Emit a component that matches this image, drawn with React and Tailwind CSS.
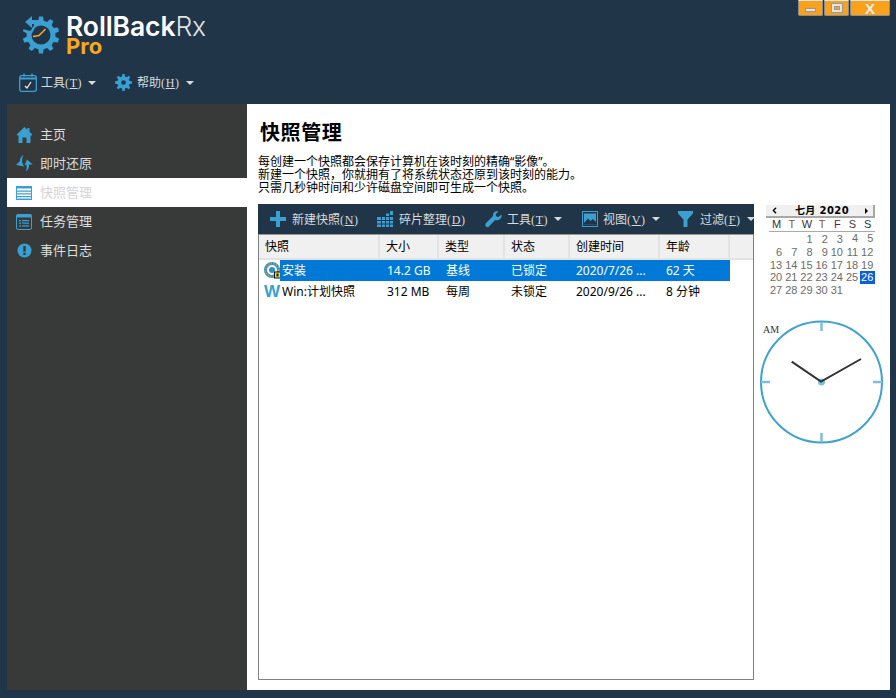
import { ChevronLeft } from "lucide-react"

const cjk = "font-['Noto_Sans','Noto_Sans_CJK_SC',sans-serif]"

// builds a cog outline for the logo and the help menu icon
const gearPath = (cx, cy, outer, inner, teeth) => {
  const pts = []
  for (let i = 0; i < teeth; i++) {
    const step = (Math.PI * 2) / teeth
    const a = i * step - Math.PI / 2
    const list = [
      [a - step * 0.17, outer],
      [a + step * 0.17, outer],
      [a + step * 0.3, inner],
      [a + step * 0.7, inner],
    ]
    list.forEach(([ang, r]) => {
      pts.push(`${(cx + Math.cos(ang) * r).toFixed(2)} ${(cy + Math.sin(ang) * r).toFixed(2)}`)
    })
  }
  return "M" + pts.join("L") + "Z"
}

const LogoGear = () => (
  <svg width="40" height="40" viewBox="0 0 40 40" className="shrink-0">
    <path d={gearPath(20, 21, 18.5, 14.5, 10)} fill="#3a9fd1" />
    <circle cx="20" cy="21" r="9.5" fill="#213549" />
    <path d="M0 0H12L13 13L9 17L2 15Z" fill="#213549" />
    <path d="M4 8L11 2V6H20V10H11V14Z" fill="#3a9fd1" />
    <path d="M11 14L14 10.500L13.500 15L11 19Z" fill="#3a9fd1" />
    <path d="M12 22.500L18 21.500L24.500 15" fill="none" stroke="#f5a623" strokeWidth="1.600" />
  </svg>
)

const CalendarIcon = () => (
  <svg width="18" height="19" viewBox="0 0 18 19" className="shrink-0">
    <rect x="0.700" y="2.700" width="16.600" height="15.600" rx="2" fill="none" stroke="#3a9fd1" strokeWidth="1.300" />
    <path d="M1 5.500h16" stroke="#3a9fd1" strokeWidth="2" />
    <path d="M5 0.500v3M13 0.500v3" stroke="#3a9fd1" strokeWidth="1.500" />
    <path d="M6 13l2 2L12 9" fill="none" stroke="#e8e8e8" strokeWidth="1.300" />
  </svg>
)

const HelpGear = () => (
  <svg width="17" height="17" viewBox="0 0 18 18" className="shrink-0">
    <path d={gearPath(9, 9, 9, 6.600, 8)} fill="#3a9fd1" />
    <circle cx="9" cy="9" r="2.500" fill="#213549" />
  </svg>
)

const Caret = () => <span className="ml-[6px] inline-block w-0 h-0 border-x-[4px] border-x-transparent border-t-[4px] border-t-[#d8dadc]" />

const HomeIcon = () => (
  <svg width="15" height="16" viewBox="0 0 15 16">
    <path d="M7.500 0L10.500 2.800V1H12.500V4.700L15 7.200V8.500H13.500V16H9.500V10.500H5.500V16H1.500V8.500H0V7.200Z" fill="#3a9fd1" />
  </svg>
)

const RestoreIcon = () => (
  <svg width="17" height="17" viewBox="0 0 17 17">
    <path d="M7.700 0Q3.500 2.500 4 6L0 10L8 11.500L6 7Q5.500 3 7.700 0Z" fill="#3a9fd1" />
    <path d="M10 16.500Q13.500 13.500 13 9.500L16.700 9.500L11 4.500L8.500 10.500L10.500 9.500Q11 13 10 16.500Z" fill="#3a9fd1" />
  </svg>
)

const ListIcon = () => (
  <svg width="16" height="14" viewBox="0 0 16 14">
    <rect width="16" height="14" fill="#3a9fd1" />
    <path d="M1 2.500h14v2H1zM1 5.800h14v1.400H1zM1 8.500h14v1.400H1zM1 11.200h14v1.400H1z" fill="#fff" />
  </svg>
)

const TaskIcon = () => (
  <svg width="16" height="16" viewBox="0 0 16 16">
    <rect x="0.500" y="0.500" width="15" height="15" rx="1.500" fill="none" stroke="#3a9fd1" />
    <path d="M0.500 0.500h15v3h-15z" fill="#3a9fd1" />
    <path d="M3 6h2v1.200H3zM6 6h7v1.200H6zM3 8.600h2v1.200H3zM6 8.600h7v1.200H6zM3 11.200h2v1.200H3zM6 11.200h7v1.200H6z" fill="#3a9fd1" />
  </svg>
)

const AlertIcon = () => (
  <svg width="15" height="15" viewBox="0 0 15 15">
    <circle cx="7.500" cy="7.500" r="7" fill="#3a9fd1" />
    <rect x="6.300" y="3" width="2.400" height="5.600" fill="#373a38" />
    <rect x="6.300" y="9.800" width="2.400" height="2.200" fill="#373a38" />
  </svg>
)

const PlusIcon = () => (
  <svg width="16" height="16" viewBox="0 0 16 16" className="shrink-0">
    <path d="M6 0h4v6h6v4h-6v6H6v-6H0V6h6z" fill="#3a9fd1" />
  </svg>
)

const DefragIcon = () => (
  <svg width="16" height="16" viewBox="0 0 16 16" className="shrink-0">
    <path
      d="M0 6h4v3H0zM5 6h3v3H5zM9 6h3v3H9zM0 10h4v2.500H0zM5 10h3v2.500H5zM9 10h3v2.500H9zM13 10h3v2.500h-3zM0 13.500h4V16H0zM5 13.500h3V16H5zM9 13.500h3V16H9zM13 13.500h3V16h-3zM13 6h3v3h-3zM9 2.500h3v2.500H9zM13 0h3v4h-3z"
      fill="#3a9fd1"
    />
  </svg>
)

const WrenchIcon = () => (
  <svg width="17" height="17" viewBox="0 0 17 17" className="shrink-0">
    <path d="M16.500 3.500L13.500 6L11 5.200L10.800 3L13.500 0.500C10.500 -0.500 7.500 1.500 8 5L1 12C-0.500 13.500 0.500 16.500 3.200 16.300L10.200 9C13.500 10 17.500 7.500 16.500 3.500Z" fill="#3a9fd1" />
  </svg>
)

const PictureIcon = () => (
  <svg width="16" height="16" viewBox="0 0 16 16" className="shrink-0">
    <rect x="0.500" y="0.500" width="15" height="15" fill="none" stroke="#3a9fd1" />
    <rect x="2" y="2.500" width="12" height="11" fill="#3a9fd1" />
    <path d="M2 12L6 7.500L8.500 10L11 8L14 11V13.500H2Z" fill="#213549" />
  </svg>
)

const FilterIcon = () => (
  <svg width="15" height="16" viewBox="0 0 15 16" className="shrink-0">
    <path d="M0 0H15V2.500L9.500 8.500V16H5.500V8.500L0 2.500Z" fill="#3a9fd1" />
  </svg>
)

const DiskLockIcon = () => (
  <svg width="18" height="17" viewBox="0 0 18 17" className="shrink-0">
    <circle cx="8" cy="8" r="6.500" fill="#fff" stroke="#2f8fc7" strokeWidth="3" />
    <circle cx="8" cy="8" r="6.500" fill="none" stroke="#d9a23c" strokeWidth="1.500" strokeDasharray="1.200 1.400" />
    <circle cx="8" cy="8" r="3" fill="#2f8fc7" />
    <rect x="10.500" y="10" width="6" height="6" fill="#f7e21c" stroke="#111" />
    <rect x="12.500" y="11.500" width="2" height="3" fill="#111" />
  </svg>
)

const navItems = [
  { label: "主页", icon: <HomeIcon /> },
  { label: "即时还原", icon: <RestoreIcon /> },
  { label: "快照管理", icon: <ListIcon />, active: true },
  { label: "任务管理", icon: <TaskIcon /> },
  { label: "事件日志", icon: <AlertIcon /> },
]

const columns = [
  { label: "快照", w: "w-[121px]" },
  { label: "大小", w: "w-[59px]" },
  { label: "类型", w: "w-[66px]" },
  { label: "状态", w: "w-[65px]" },
  { label: "创建时间", w: "w-[90px]" },
  { label: "年龄", w: "w-[70px]" },
]

const dayNames = ["M", "T", "W", "T", "F", "S", "S"]
const dayColors = ["text-[#333]", "text-[#8a5a1e]", "text-[#333]", "text-[#8a5a1e]", "text-[#5a1e4a]", "text-[#444]", "text-[#1e3a5a]"]
const days = [null, null, 1, 2, 3, 4, 5, 6, 7, 8, 9, 10, 11, 12, 13, 14, 15, 16, 17, 18, 19, 20, 21, 22, 23, 24, 25, 26, 27, 28, 29, 30, 31]

const Clock = () => (
  <svg width="126" height="124" viewBox="0 0 126 124" className="block">
    <circle cx="63.500" cy="62" r="60.500" fill="none" stroke="#3fa2cf" strokeWidth="2" />
    <path d="M63.500 2v9M63.500 113v9M3 62h9M115 62h9" stroke="#7cc0e0" strokeWidth="2.500" />
    <circle cx="63.500" cy="62" r="3.500" fill="#7cc0e0" />
    <path d="M33.700 41.700L63 61.500L103 39" fill="none" stroke="#333" strokeWidth="2" />
  </svg>
)

const ToolbarItem = ({ icon, label, hotkey, caret, className }) => (
  <div className={`flex items-center shrink-0 ${className}`}>
    {icon}
    <span className="whitespace-nowrap pt-px">
      {label}
      <span className="font-['Liberation_Serif',serif] tracking-[0.6px]">
        (<span className="underline">{hotkey}</span>)
      </span>
    </span>
    {caret && <Caret />}
  </div>
)

const captionBtn = "h-[16px] bg-[#f9a11b] border border-[#8d8d8d] border-t-[#e8e8e8] rounded-b-[2px] flex items-center justify-center"

export default function App() {
  return (
    <div className={`w-[896px] h-[698px] bg-[#213549] flex flex-col overflow-hidden relative ${cjk}`}>
      <div className="absolute right-[6px] top-0 flex gap-px">
        <div className={`w-[25px] ${captionBtn}`}>
          <span className="w-[11px] h-[4px] mt-1 bg-[#e4e4e4] border border-[#999]" />
        </div>
        <div className={`w-[25px] ${captionBtn}`}>
          <span className="w-[12px] h-[10px] bg-[#e4e4e4] border border-[#999] flex items-center justify-center">
            <span className="w-[6px] h-[4px] bg-[#f9a11b] border border-[#999]" />
          </span>
        </div>
        <div className={`w-[40px] ${captionBtn} text-[#ececec] text-[15px] font-bold leading-none font-['Liberation_Sans',sans-serif]`}>
          X
        </div>
      </div>

      <div className="h-[104px] shrink-0 flex flex-col pl-[19px]">
        <div className="flex mt-[14px] pl-[2px] h-[40px]">
          <LogoGear />
          <div className="ml-[5px] font-['Inter',sans-serif]">
            <div className="text-[26.500px] leading-[22px] mt-[1px] tracking-[-0.1px] whitespace-nowrap text-white font-semibold">
              RollBack<span className="font-light text-[#dfe3e6]">Rx</span>
            </div>
            <div className="text-[22px] leading-[18px] font-bold text-[#f7a81f]">Pro</div>
          </div>
        </div>
        <div className="flex items-center mt-[19px] text-[12px] text-[#d8dadc]">
          <ToolbarItem icon={<CalendarIcon />} label={<span className="ml-[4px]">工具</span>} hotkey="T" caret className="w-[96px]" />
          <ToolbarItem icon={<HelpGear />} label={<span className="ml-[5px]">帮助</span>} hotkey="H" caret />
        </div>
      </div>

      <div className="flex h-[586px] ml-[7px] mr-[6px] shrink-0">
        <nav className="w-[240px] shrink-0 bg-[#373a38] pt-[16px]">
          {navItems.map((item) => (
            <div
              key={item.label}
              className={`h-[29px] flex items-center text-[13px] ${item.active ? "bg-white text-[#d4d4d4]" : "text-[#dddddd]"}`}
            >
              <span className="w-[33px] flex justify-center pl-[1px] shrink-0">{item.icon}</span>
              {item.label}
            </div>
          ))}
        </nav>

        <main className="flex-1 bg-white pl-[11px] pr-[15px] pt-[16px] flex gap-[12px] min-w-0">
          <div className="w-[496px] shrink-0 flex flex-col">
            <h1 className="text-[20px] leading-[26px] font-bold tracking-[0.6px] pl-[2px] text-black font-['Liberation_Serif','Noto_Sans_CJK_SC',serif]">快照管理</h1>
            <div className="mt-[9px] text-[12px] leading-[13px] text-black whitespace-nowrap">
              <p>每创建一个快照都会保存计算机在该时刻的精确“影像”。</p>
              <p>新建一个快照，你就拥有了将系统状态还原到该时刻的能力。</p>
              <p>只需几秒钟时间和少许磁盘空间即可生成一个快照。</p>
            </div>
            <div className="mt-[10px] h-[30px] bg-[#213549] flex items-center pl-[12px] text-[12px] text-[#d8dadc] overflow-hidden shrink-0">
              <ToolbarItem icon={<PlusIcon />} label={<span className="ml-[6px]">新建快照</span>} hotkey="N" className="w-[107px]" />
              <ToolbarItem icon={<DefragIcon />} label={<span className="ml-[6px]">碎片整理</span>} hotkey="D" className="w-[108px]" />
              <ToolbarItem icon={<WrenchIcon />} label={<span className="ml-[5px]">工具</span>} hotkey="T" caret className="w-[97px]" />
              <ToolbarItem icon={<PictureIcon />} label={<span className="ml-[5px]">视图</span>} hotkey="V" caret className="w-[96px]" />
              <ToolbarItem icon={<FilterIcon />} label={<span className="ml-[7px]">过滤</span>} hotkey="F" caret />
            </div>
            <div className="h-[446px] border border-[#808080] border-t-0 flex flex-col text-[12px] text-black">
              <div className="h-[26px] flex bg-[#f0f0f0] border-t border-t-[#9a9a9a] border-b-2 border-b-[#e3e3e3] shrink-0">
                {columns.map((col) => (
                  <div key={col.label} className={`${col.w} flex items-center pl-[6px] pt-px border-r-2 border-r-[#e3e3e3] shrink-0`}>
                    {col.label}
                  </div>
                ))}
              </div>
              <div className="h-[21px] flex items-center">
                <span className="w-[21px] pl-[5px] shrink-0">
                  <DiskLockIcon />
                </span>
                <div className="w-[450px] h-full bg-[#0078d7] text-white flex items-center">
                  <span className="w-[100px] pl-[2px] shrink-0">安装</span>
                  <span className="w-[59px] pl-[7px] shrink-0">14.2 GB</span>
                  <span className="w-[66px] pl-[7px] shrink-0">基线</span>
                  <span className="w-[65px] pl-[6px] shrink-0">已锁定</span>
                  <span className="w-[90px] pl-[6px] shrink-0 whitespace-nowrap">2020/7/26 ...</span>
                  <span className="pl-[6px]">62 天</span>
                </div>
              </div>
              <div className="h-[21px] flex items-center">
                <span className="w-[23px] pl-[5px] shrink-0 text-[#3a9fd1] font-black text-[17px] leading-none font-['Liberation_Sans',sans-serif]">W</span>
                <span className="w-[98px] shrink-0 whitespace-nowrap">Win:计划快照</span>
                <span className="w-[59px] pl-[7px] shrink-0">312 MB</span>
                <span className="w-[66px] pl-[7px] shrink-0">每周</span>
                <span className="w-[65px] pl-[6px] shrink-0">未锁定</span>
                <span className="w-[90px] pl-[6px] shrink-0 whitespace-nowrap">2020/9/26 ...</span>
                <span className="pl-[6px]">8 分钟</span>
              </div>
            </div>
          </div>

          <aside className="flex-1 min-w-0 flex flex-col">
            <div className="h-[59px]" />
            <div className="w-[109px] mt-[29px] -translate-y-[3px]">
              <div className="h-[13px] bg-[#f0f0f0] border-r-2 border-b-2 border-[#a8a8a8] flex items-center justify-between px-[4px] text-[10px] font-bold text-black tracking-[0.4px] font-['DejaVu_Sans','Noto_Sans_CJK_SC',sans-serif]">
                <ChevronLeft size={9} strokeWidth={4} />
                <span className="leading-none">七月 2020</span>
                <span className="w-0 h-0 border-y-[3px] border-y-transparent border-l-[3px] border-l-black mr-[1px]" />
              </div>
              <div className="grid grid-cols-[repeat(7,15.200px)] pl-[3px] text-[11px] font-['Liberation_Sans',sans-serif] text-[#6b6b6b] leading-[12.800px] text-right">
                {dayNames.map((d, i) => (
                  <div key={i} className={`h-[14px] leading-[12px] border-b border-[#aaa] text-center ${dayColors[i]}`}>
                    {d}
                  </div>
                ))}
                {days.map((d, i) => (
                  <div key={i} className={`h-[12.800px] pr-[2px] ${d === 26 ? "bg-[#0a5fd8] text-white" : ""} ${i < 5 ? "mt-[1px]" : ""}`}>
                    {d}
                  </div>
                ))}
              </div>
            </div>
            <div className="relative mt-[20px] -ml-[8px] w-[126px]">
              <span className="absolute left-[5px] top-[5px] text-[10px] leading-none text-[#333] font-['Liberation_Serif',serif]">AM</span>
              <Clock />
            </div>
          </aside>
        </main>
      </div>
    </div>
  )
}
